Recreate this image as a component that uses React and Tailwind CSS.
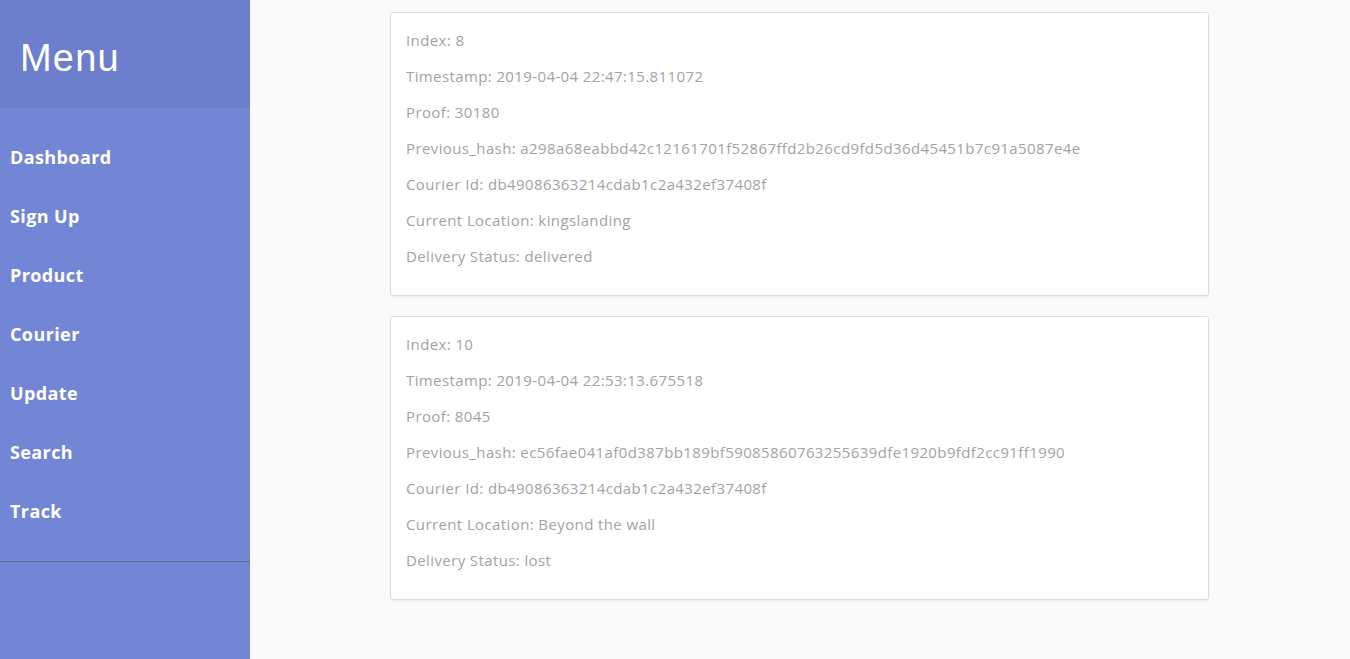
const blocks = [
  {
    index: 8,
    timestamp: '2019-04-04 22:47:15.811072',
    proof: 30180,
    prev: 'a298a68eabbd42c12161701f52867ffd2b26cd9fd5d36d45451b7c91a5087e4e',
    courier: 'db49086363214cdab1c2a432ef37408f',
    location: 'kingslanding',
    status: 'delivered',
  },
  {
    index: 10,
    timestamp: '2019-04-04 22:53:13.675518',
    proof: 8045,
    prev: 'ec56fae041af0d387bb189bf59085860763255639dfe1920b9fdf2cc91ff1990',
    courier: 'db49086363214cdab1c2a432ef37408f',
    location: 'Beyond the wall',
    status: 'lost',
  },
];

const links = ['Dashboard', 'Sign Up', 'Product', 'Courier', 'Update', 'Search', 'Track'];

function Sidebar() {
  return (
    <nav className="w-[250px] shrink-0 bg-[#7386d5] text-white">
      <div className="h-[108px] bg-[#6d7fcc] px-5 pt-[39px]">
        <h3 className="text-[38px] tracking-[1.2px] font-['Liberation_Sans',sans-serif] leading-none">Menu</h3>
      </div>
      <ul className="py-5 border-b border-[#47748b] font-['Open_Sans',sans-serif]">
        {links.map((l) => (
          <li key={l}>
            <a href="#" className="block h-[59px] px-[10px] leading-[59px] text-[18px] tracking-[0.4px] font-bold">{l}</a>
          </li>
        ))}
      </ul>
    </nav>
  );
}

function BlockCard({ b }) {
  const rows = [
    `Index: ${b.index}`,
    `Timestamp: ${b.timestamp}`,
    `Proof: ${b.proof}`,
    `Previous_hash: ${b.prev}`,
    `Courier Id: ${b.courier}`,
    `Current Location: ${b.location}`,
    `Delivery Status: ${b.status}`,
  ];
  return (
    <div className="bg-white border border-[#dcdcdc] rounded-[3px] shadow-[0_1px_2px_rgba(0,0,0,0.06)] px-[15px] py-[15px]">
      {rows.map((r) => (
        <p key={r} className="h-[36px] leading-[24px] text-[15px] tracking-[0.39px] text-[#a3a3a3]">{r}</p>
      ))}
    </div>
  );
}

export default function App() {
  return (
    <div className="flex min-h-[659px] bg-[#fafafa] font-['Open_Sans',sans-serif]">
      <Sidebar />
      <main className="flex-1 pl-[140px] pt-3">
        <div className="w-[819px] flex flex-col gap-5">
          {blocks.map((b) => (
            <BlockCard key={b.index} b={b} />
          ))}
        </div>
      </main>
    </div>
  );
}
